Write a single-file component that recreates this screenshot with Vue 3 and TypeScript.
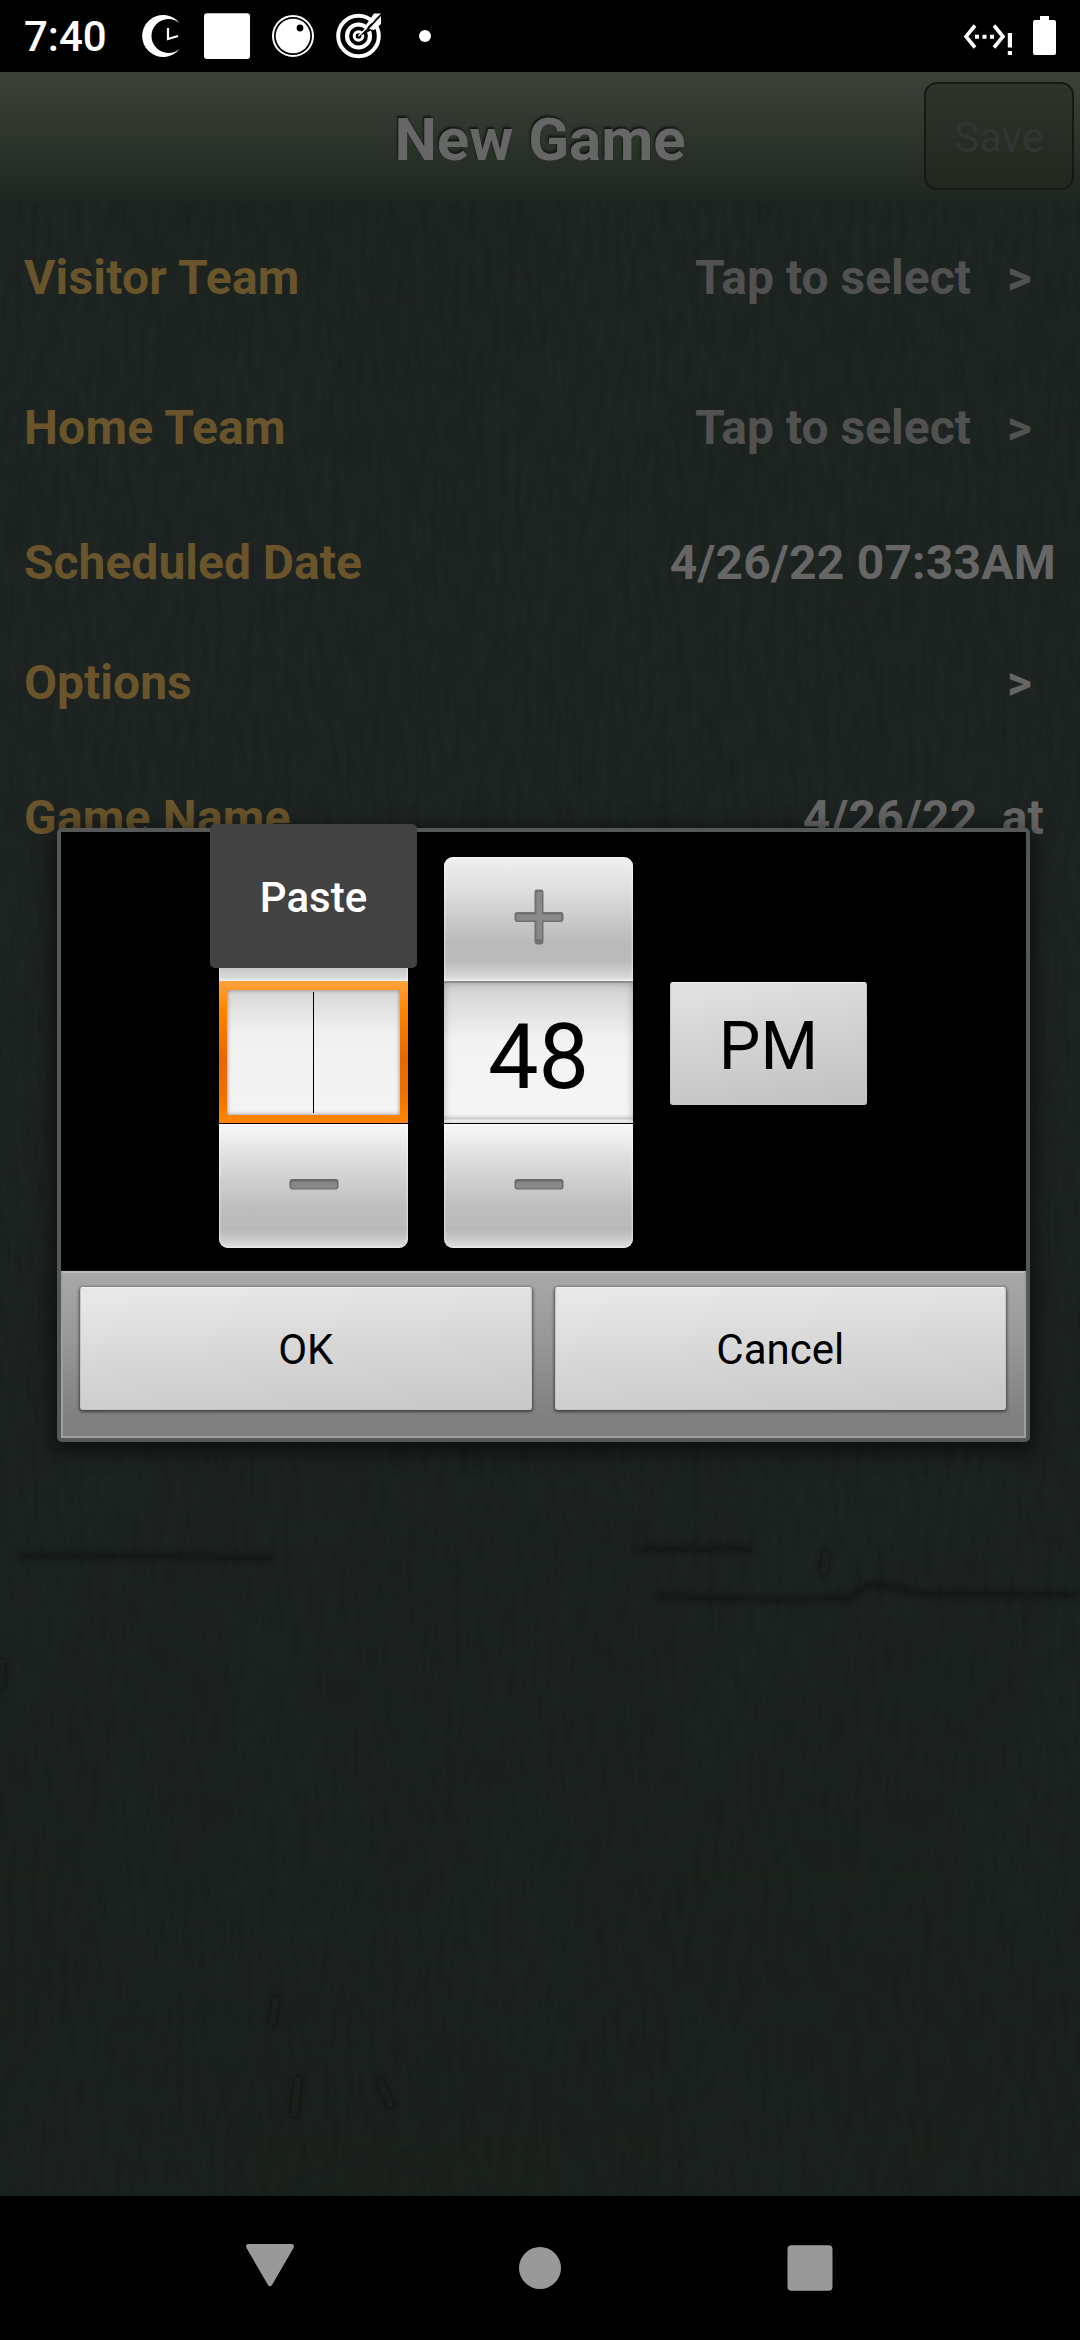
<script setup lang="ts">
interface Row {
  label: string
  value: string
  arrow: boolean
  kind: string
}

const rows: Row[] = [
  { label: 'Visitor Team', value: 'Tap to select', arrow: true, kind: 'team' },
  { label: 'Home Team', value: 'Tap to select', arrow: true, kind: 'team second' },
  { label: 'Scheduled Date', value: '4/26/22 07:33AM', arrow: false, kind: 'date' },
  { label: 'Options', value: '', arrow: true, kind: 'options' },
  { label: 'Game Name', value: '4/26/22  at', arrow: false, kind: 'name' },
]
</script>

<template>
  <div class="screen">
    <header class="status">
      <span class="clock">7:40</span>
      <svg class="notifs" width="300" height="72" viewBox="140 0 300 72">
        <path d="M180 23.500A21 21 0 1 0 180 48.500A17 17 0 1 1 180 23.500Z" fill="#fff" />
        <path d="M168 28v11l10-3" fill="none" stroke="#fff" stroke-width="2.200" />
        <rect x="204" y="13.300" width="46" height="45.700" rx="3" fill="#fff" />
        <circle cx="293" cy="36" r="20" fill="none" stroke="#fff" stroke-width="2" />
        <circle cx="293" cy="36" r="17.300" fill="#fff" />
        <circle cx="300" cy="28" r="3.400" fill="#000" />
        <g fill="none" stroke="#fff">
          <circle cx="358.500" cy="36" r="20.300" stroke-width="4" />
          <circle cx="358.500" cy="36" r="11.500" stroke-width="4.200" />
          <circle cx="358.500" cy="36" r="4.300" stroke-width="3" />
        </g>
        <path d="M358 37L382 13V24L374 29Z" fill="#000" />
        <path d="M366 25l8-11.500h7L367.500 27ZM369 29L381 16v8l-7 6Z" fill="#fff" />
        <path d="M358.500 36L367 27.500" stroke="#fff" stroke-width="1.500" />
        <circle cx="425" cy="36" r="6" fill="#fff" />
      </svg>
      <svg class="system" width="100" height="72" viewBox="960 0 100 72">
        <g fill="none" stroke="#fff" stroke-width="3.600">
          <path d="M975 25.500L966 36.500L975 47.500M994 25.500L1003 36.500L994 47.500" />
        </g>
        <path
          d="M975 34.800h4v4h-4zM982.500 34.800h4v4h-4zM990 34.800h4v4h-4zM1007.800 33h4.200v14.500h-4.200zM1007.800 51h4.200v4h-4.200z"
          fill="#fff"
        />
        <path
          d="M1040 16h9v4h5a2 2 0 0 1 2 2v31a2 2 0 0 1-2 2h-19a2 2 0 0 1-2-2v-31a2 2 0 0 1 2-2h5z"
          fill="#fff"
        />
      </svg>
    </header>

    <main class="page">
      <svg class="grain" width="1080" height="2124" aria-hidden="true">
        <filter id="fibre" x="0" y="0" width="100%" height="100%" color-interpolation-filters="sRGB">
          <feTurbulence type="fractalNoise" baseFrequency="0.13 0.025" numOctaves="3" seed="6" />
          <feColorMatrix values="0 0 0 0 0.030  0 0 0 0 0.050  0 0 0 0 0.030  1.500 0 0 0 -0.630" />
        </filter>
        <filter id="cloud" x="0" y="0" width="100%" height="100%" color-interpolation-filters="sRGB">
          <feTurbulence type="fractalNoise" baseFrequency="0.006 0.003" numOctaves="2" seed="11" />
          <feColorMatrix values="0 0 0 0 0.120  0 0 0 0 0.150  0 0 0 0 0.160  1.500 0 0 0 -0.450" />
        </filter>
        <filter id="soften" x="-5%" y="-5%" width="110%" height="110%">
          <feGaussianBlur stdDeviation="3" />
        </filter>
        <rect width="1080" height="2124" filter="url(#cloud)" opacity="0.400" />
        <rect width="1080" height="2124" filter="url(#fibre)" opacity="0.220" />
        <g fill="none" stroke="#0d120e" stroke-width="7" stroke-linecap="round" filter="url(#soften)">
          <path d="M20 1484H170L270 1486M640 1477H750M660 1524L780 1528L850 1525L870 1512L925 1522L1078 1523" opacity="0.300" />
          <path d="M298 2008L294 2042M276 1928L272 1950M380 2010L390 2032M2 1590V1612M826 1482L824 1500" opacity="0.500" />
        </g>
      </svg>

      <div class="titlebar">
        <h1>New Game</h1>
        <button class="save">Save</button>
      </div>

      <div v-for="row in rows" :key="row.label" class="row" :class="row.kind">
        <span class="label">{{ row.label }}</span>
        <span class="value">{{ row.value }}</span>
        <span v-if="row.arrow" class="arrow">&gt;</span>
      </div>
    </main>

    <nav class="navbar">
      <svg width="1080" height="144" viewBox="0 2196 1080 144" fill="#999">
        <path d="M248.500 2244h43q3.500 0 2 4L272 2285q-2 2.500-4 0L246.500 2248q-1.500-4 2-4z" />
        <circle cx="540" cy="2268" r="21" />
        <rect x="787.500" y="2245.300" width="45" height="45.400" rx="4" />
      </svg>
    </nav>

    <section class="dialog">
      <div class="pickers">
        <div class="picker">
          <button class="step up"></button>
          <div class="field focused"><div class="inner"><i class="caret"></i></div></div>
          <button class="step down">
            <svg width="50" height="56" viewBox="0 0 50 56">
              <rect x="0.500" y="23" width="49" height="10.500" rx="3" fill="#696969" />
              <rect x="2" y="25.500" width="46" height="7" rx="2" fill="#878787" />
            </svg>
          </button>
        </div>
        <div class="picker">
          <button class="step up">
            <svg width="50" height="56" viewBox="0 0 50 56">
              <path
                d="M23 0.500h4q2.500 0 2.500 3V23H47q2.500 0 2.500 3v4q0 3-3 3H29.500V52q0 3.500-3 3.500h-3q-3 0-3-3.500V33H3.500q-3 0-3-3v-4q0-3 3-3H20.500V3.500q0-3 2.500-3z"
                fill="#707070"
              />
              <path d="M22.500 3h5.500v22.500h19v6H28V50h-5.500V31.500H2.500v-6h20z" fill="#898989" />
            </svg>
          </button>
          <div class="field">48</div>
          <button class="step down">
            <svg width="50" height="56" viewBox="0 0 50 56">
              <rect x="0.500" y="23" width="49" height="10.500" rx="3" fill="#696969" />
              <rect x="2" y="25.500" width="46" height="7" rx="2" fill="#878787" />
            </svg>
          </button>
        </div>
        <button class="btn meridiem">PM</button>
      </div>
      <div class="actions">
        <button class="btn">OK</button>
        <button class="btn">Cancel</button>
      </div>
      <div class="paste">Paste</div>
    </section>
  </div>
</template>

<style>
body {
  background: #000;
}
</style>

<style scoped>
.screen {
  position: relative;
  display: flex;
  flex-direction: column;
  width: 1080px;
  height: 2340px;
  overflow: hidden;
  background: #000;
  font-family: Roboto, sans-serif;
}
.screen * {
  box-sizing: border-box;
}
button {
  margin: 0;
  padding: 0;
  border: 0;
  font-family: inherit;
}
svg {
  display: block;
}
.status {
  display: flex;
  height: 72px;
  color: #fff;
}
.clock {
  width: 116px;
  margin-left: 24px;
  font-size: 42px;
  font-weight: 500;
  line-height: 74px;
}
.system {
  margin-left: auto;
  margin-right: 20px;
}
.page {
  position: relative;
  height: 2124px;
  background: linear-gradient(#1e2521, #1d2421 40%, #1a201c);
}
.grain {
  position: absolute;
  left: 0;
  top: 0;
}
.titlebar {
  position: relative;
  display: flex;
  align-items: center;
  justify-content: center;
  height: 129px;
  background: linear-gradient(#3c4239, #2c332b 55%, #1f2620);
}
h1 {
  margin: 6px 0 0;
  color: #666;
  font-size: 60px;
  font-weight: 700;
  line-height: 70px;
  text-shadow: -1px -2px 2px #111510;
}
.save {
  position: absolute;
  right: 6px;
  top: 10px;
  width: 150px;
  height: 108px;
  padding-top: 2px;
  border: 2px solid #141a12;
  border-radius: 13px;
  background: linear-gradient(#2e342b, #222820);
  color: #333534;
  font-size: 42px;
}
.row {
  position: relative;
  display: flex;
  align-items: flex-start;
  height: 120px;
  padding: 0 24px;
  color: #666;
  font-size: 48px;
  font-weight: 700;
  line-height: 56px;
  white-space: pre;
}
.team {
  height: 150px;
  padding-top: 49px;
}
.second {
  height: 165px;
}
.team .value,
.team .arrow {
  color: #515151;
}
.date {
  padding-top: 19px;
}
.options {
  padding-top: 19px;
  height: 135px;
}
.name {
  padding-top: 19px;
  padding-right: 36px;
}
.label {
  color: #69542b;
}
.team .label,
.name .label {
  letter-spacing: 0.2px;
}
.value {
  margin-left: auto;
}
.date .value,
.name .value {
  letter-spacing: 0.2px;
}
.arrow {
  width: 49px;
  margin-left: 36px;
}
.navbar {
  height: 144px;
}
.dialog {
  position: absolute;
  left: 57px;
  top: 828px;
  width: 973px;
  height: 614px;
  border: 4px solid #555857;
  border-radius: 5px;
  background: #000;
  box-shadow: 0 5px 22px 2px rgba(0, 0, 0, 0.65);
}
.pickers {
  display: flex;
  gap: 36px;
  height: 439px;
  padding: 25px 0 0 158px;
  border-bottom: 1px solid #111;
}
.picker {
  width: 189px;
  height: 391px;
}
.step {
  display: flex;
  align-items: center;
  justify-content: center;
  width: 189px;
  height: 124px;
  padding-bottom: 5px;
}
.up {
  border-radius: 9px 9px 0 0;
  background: linear-gradient(#f0f0f0, #dcdcdc 30%, #b9b9b9 70%, #bcbcbc 85%, #d8d8d8 97%, #e8e8e8);
  box-shadow: inset 0 0 3px #fff;
}
.down {
  border-radius: 0 0 9px 9px;
  background: linear-gradient(#f8f8f8, #dcdcdc 30%, #bfbfbf 65%, #b8b8b8 85%, #c8c8c8 92%, #dedede);
  box-shadow: inset 0 0 3px #fff;
}
.field {
  display: flex;
  justify-content: center;
  width: 189px;
  height: 143px;
  border-top: 2px solid #8d8d8d;
  border-bottom: 1px solid #000;
  background: linear-gradient(#cfcfcf, #dedede 15%, #f3f3f3 42%, #f5f5f5 94%, #d4d4d4 97%, #fff 98%);
  box-shadow: inset 0 0 8px rgba(0, 0, 0, 0.25);
  color: #000;
  font-size: 90px;
  line-height: 149px;
}
.focused {
  padding: 9px 8px 8px;
  border-top: 0;
  background: linear-gradient(#ffa33e, #ff8500 20%, #e86800 55%, #ee7000 80%, #ff8200 96%);
  box-shadow: none;
}
.inner {
  display: flex;
  justify-content: center;
  width: 173px;
  height: 125px;
  padding-top: 2px;
  background: linear-gradient(#d8d8d8, #f1f1f1 35%, #f3f4f5);
  box-shadow: inset 0 0 4px rgba(90, 80, 70, 0.7);
}
.caret {
  width: 1px;
  height: 121px;
  background: #000;
}
.btn {
  flex: 1;
  height: 123px;
  padding-top: 2px;
  border: 1px solid #c5c5c5;
  border-top-color: #f2f2f2;
  border-radius: 3px;
  background: linear-gradient(176deg, #e7e7e7 8%, #d8d8d8 48%, #c9c9c9 95%);
  box-shadow: 0 1px 3px 1px rgba(0, 0, 0, 0.5);
  color: #000;
  font-size: 42px;
}
.meridiem {
  flex: none;
  width: 197px;
  margin-top: 125px;
  margin-left: 1px;
  padding-top: 5px;
  background: linear-gradient(170deg, #e0e0e0 8%, #d2d2d2 48%, #c2c2c2 95%);
  font-size: 66px;
}
.actions {
  display: flex;
  gap: 23px;
  height: 167px;
  padding: 16px 18px 0 17px;
  border: 2px solid #a0a0a0;
  border-top-color: #b9b9b9;
  background: linear-gradient(#a8a8a8, #969696 45%, #808080 88%);
}
.actions .btn {
  margin-top: -2px;
}
.paste {
  position: absolute;
  left: 149px;
  top: -8px;
  width: 207px;
  height: 144px;
  border-radius: 5px;
  background: #424242;
  color: #fff;
  font-size: 42px;
  font-weight: 500;
  line-height: 147px;
  text-align: center;
}
</style>
